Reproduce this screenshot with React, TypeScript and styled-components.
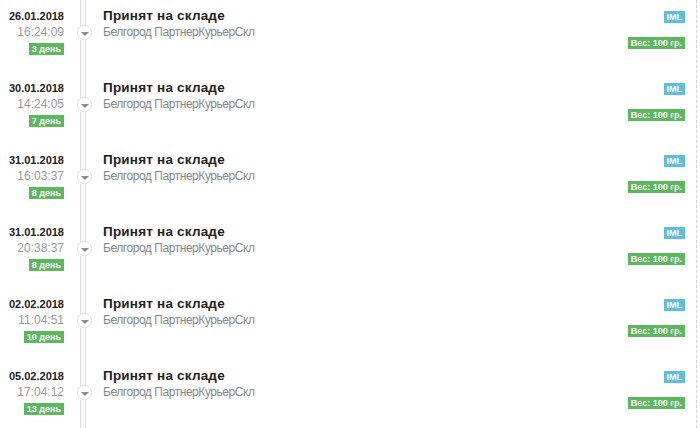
import React from 'react';
import styled, { createGlobalStyle } from 'styled-components';

const GlobalStyle = createGlobalStyle`
	html, body {
		margin: 0;
		padding: 0;
		background: #fff;
	}
	body {
		font-family: "Liberation Sans", Arial, sans-serif;
		color: #333;
	}
`;

const Page = styled.div`
	width: 696px;
	height: 428px;
	overflow: hidden;
	border-right: 1px dashed #cfcfcf;
`;

const Row = styled.div`
	display: flex;
	height: 72px;
	padding-top: 8px;
	box-sizing: border-box;
`;

const DateCol = styled.div`
	width: 64px;
	display: flex;
	flex-direction: column;
	align-items: flex-end;
`;

const DateText = styled.div`
	font-size: 11px;
	font-weight: bold;
	line-height: 16px;
	color: #222;
`;

const TimeText = styled.div`
	font-size: 12px;
	line-height: 16px;
	color: #9a9a9a;
`;

const Label = styled.span<{ $tone: 'green' | 'blue' }>`
	display: inline-block;
	background: ${(p) => (p.$tone === 'green' ? '#5cb85c' : '#5bc0de')};
	color: #fff;
	font-size: 9px;
	font-weight: bold;
	line-height: 12px;
	padding: 0 3px;
	white-space: nowrap;
`;

const DayLabel = styled(Label)`
	margin-top: 3px;
`;

const Track = styled.div`
	position: relative;
	width: 39px;
	margin-top: -8px;
	height: 72px;
	background: linear-gradient(
		to right,
		transparent 16px,
		#e2e2e2 16px,
		#e2e2e2 17px,
		#f7f7f7 17px,
		#f7f7f7 21px,
		#e2e2e2 21px,
		#e2e2e2 22px,
		transparent 22px
	);
`;

const Dot = styled.div`
	position: absolute;
	top: 25px;
	left: 13px;
	width: 13px;
	height: 13px;
	border: 1px solid #e0e0e0;
	border-radius: 50%;
	background: #fff;
	display: flex;
	align-items: center;
	justify-content: center;

	&::after {
		content: '';
		width: 0;
		height: 0;
		margin-top: 2px;
		border-left: 4px solid transparent;
		border-right: 4px solid transparent;
		border-top: 4px solid #8a8a8a;
	}
`;

const Content = styled.div`
	flex: 1;
`;

const Title = styled.div`
	font-size: 13.5px;
	font-weight: bold;
	letter-spacing: 0.2px;
	line-height: 16px;
	color: #222;
`;

const Place = styled.div`
	font-size: 12px;
	letter-spacing: -0.45px;
	line-height: 16px;
	color: #888;
`;

const Side = styled.div`
	display: flex;
	flex-direction: column;
	align-items: flex-end;
	padding-right: 11px;
	padding-top: 3px;
	gap: 14px;
`;

interface Event {
	date: string;
	time: string;
	day: number;
}

const events: Event[] = [
	{ date: '26.01.2018', time: '16:24:09', day: 3 },
	{ date: '30.01.2018', time: '14:24:05', day: 7 },
	{ date: '31.01.2018', time: '16:03:37', day: 8 },
	{ date: '31.01.2018', time: '20:38:37', day: 8 },
	{ date: '02.02.2018', time: '11:04:51', day: 10 },
	{ date: '05.02.2018', time: '17:04:12', day: 13 },
];

export default function App() {
	return (
		<>
			<GlobalStyle />
			<Page>
				{events.map((e, i) => (
					<Row key={i}>
						<DateCol>
							<DateText>{e.date}</DateText>
							<TimeText>{e.time}</TimeText>
							<DayLabel $tone="green">{e.day} день</DayLabel>
						</DateCol>
						<Track>
							<Dot />
						</Track>
						<Content>
							<Title>Принят на складе</Title>
							<Place>Белгород ПартнерКурьерСкл</Place>
						</Content>
						<Side>
							<Label $tone="blue">IML</Label>
							<Label $tone="green">Вес: 100 гр.</Label>
						</Side>
					</Row>
				))}
			</Page>
		</>
	);
}
